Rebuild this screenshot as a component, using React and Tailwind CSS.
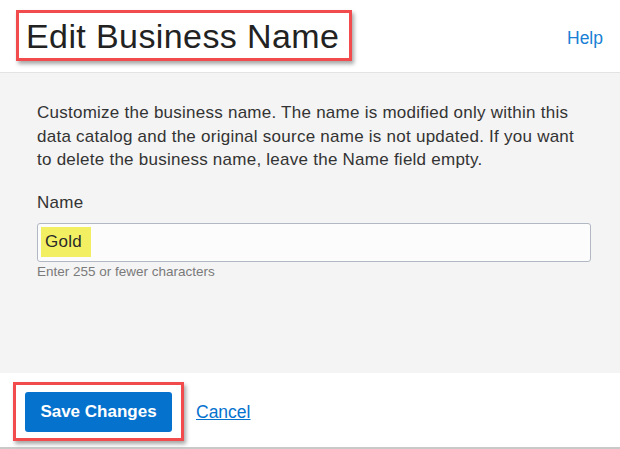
export default function App() {
  return (
    <div className="w-[620px] h-[449px] bg-white flex flex-col overflow-hidden text-[#333] font-['Liberation_Sans',Arial,sans-serif]">
      {/* Header */}
      <header className="h-[73px] shrink-0 flex items-start justify-between border-b border-[#e3e3e3] bg-white">
        <div className="ml-[16px] mt-[10px] h-[51px] w-[336px] border-[3px] border-[#f24b4e] shadow-[2px_3px_4px_rgba(0,0,0,0.35)] flex items-center pl-[7px]">
          <h1 className="text-[34px] leading-none tracking-[0.4px] text-[#222] whitespace-nowrap">Edit Business Name</h1>
        </div>
        <a href="#" className="mt-[28px] mr-[17px] text-[17.5px] leading-[20px] text-[#1a7fd4]">Help</a>
      </header>

      {/* Body */}
      <main className="h-[300px] shrink-0 bg-[#f4f4f4] pl-[37px] pr-[29px] pt-[28px]">
        <p className="text-[17px] leading-[23.5px] tracking-[0.25px] text-[#333] w-[545px]">
          Customize the business name. The name is modified only within this data catalog and the original source name is not updated. If you want to delete the business name, leave the Name field empty.
        </p>
        <label className="block mt-[20px] text-[17px] leading-[22px] tracking-[0.25px] text-[#333]">Name</label>
        <div className="mt-[9px] w-[554px] h-[39px] rounded-[3px] border border-[#b2b8c3] bg-[#fdfcfd] flex items-center pl-[3px]">
          <span className="h-[30px] bg-[#f2f062] pl-[4px] pr-[9px] flex items-center text-[17px] tracking-[0.25px] text-[#2a2a2a]">Gold</span>
        </div>
        <p className="mt-[2px] text-[13.5px] leading-[16px] text-[#7a7a7a]">Enter 255 or fewer characters</p>
      </main>

      {/* Footer */}
      <footer className="flex-1 flex items-start border-b-2 border-[#c9c9c9] bg-white">
        <div className="ml-[13px] mt-[9px] w-[171px] h-[59px] border-[3px] border-[#f24b4e] shadow-[2px_3px_4px_rgba(0,0,0,0.35)] flex items-center justify-center">
          <button className="w-[147px] h-[40px] rounded-[3px] bg-[#0572ce] text-white text-[17px] font-bold">Save Changes</button>
        </div>
        <a href="#" className="ml-[12px] mt-[29px] text-[17.5px] leading-[20px] text-[#0572ce] underline">Cancel</a>
      </footer>
    </div>
  )
}
